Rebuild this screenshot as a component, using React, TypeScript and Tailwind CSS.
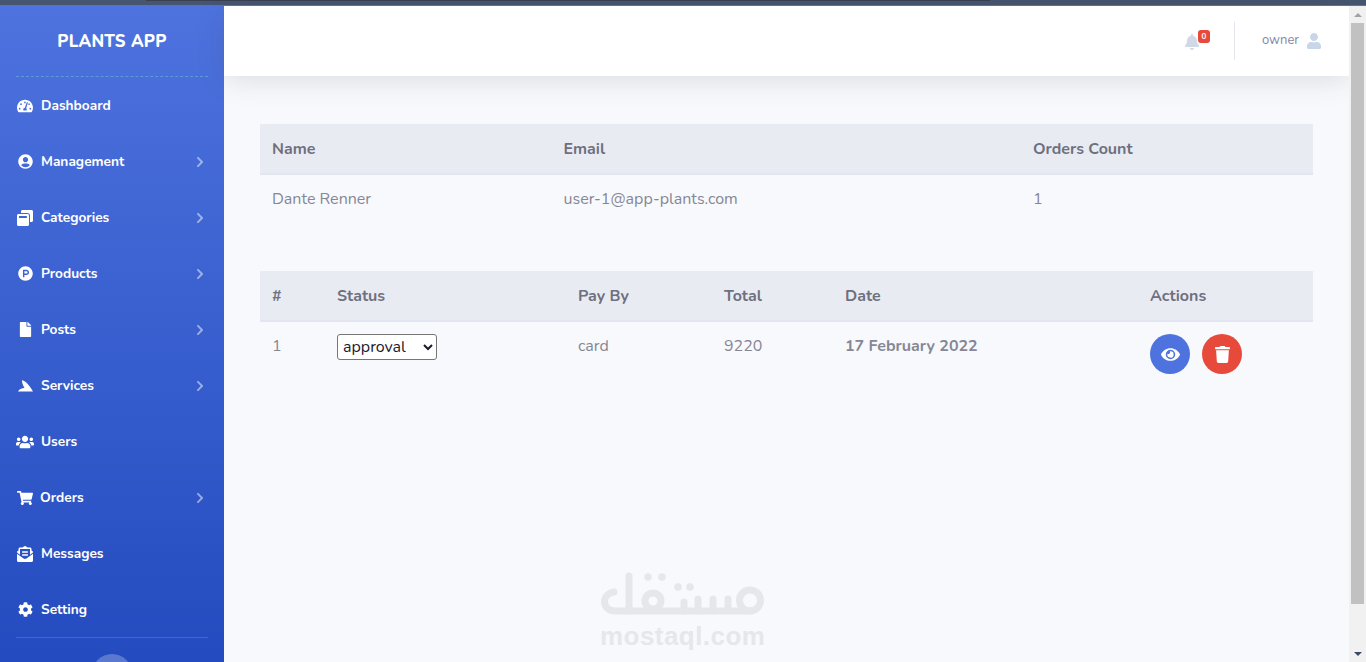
import React from "react";
import { FaTachometerAlt, FaUserCircle, FaWindowRestore, FaProductHunt, FaFile, FaUsers, FaShoppingCart, FaEnvelopeOpenText, FaCog, FaChevronRight, FaEye, FaTrash, FaBell, FaUser } from "react-icons/fa";

function FinIcon() {
  return (
    <svg width="15" height="12" viewBox="0 0 15 12" fill="currentColor">
      <path d="M4 0C8 1.5 11.5 5 15 11.5H0C1 9.5 3.5 8 6.5 8C5 5.5 4 3 4 0Z" />
    </svg>
  );
}

const items = [
  { label: "Dashboard", icon: <FaTachometerAlt className="text-[16px]" />, arrow: false, gap: "mr-[7px]" },
  { label: "Management", icon: <FaUserCircle className="text-[15px]" />, arrow: true, gap: "mr-[7px]" },
  { label: "Categories", icon: <FaWindowRestore className="text-[16px]" />, arrow: true, gap: "mr-[7px]" },
  { label: "Products", icon: <FaProductHunt className="text-[15px]" />, arrow: true, gap: "mr-[7px]" },
  { label: "Posts", icon: <FaFile className="text-[15px]" />, arrow: true, gap: "mr-[7px]" },
  { label: "Services", icon: <FinIcon />, arrow: true, gap: "mr-[7px]" },
  { label: "Users", icon: <FaUsers className="text-[18px]" />, arrow: false, gap: "mr-[7px]" },
  { label: "Orders", icon: <FaShoppingCart className="text-[16px]" />, arrow: true, gap: "mr-[6px]" },
  { label: "Messages", icon: <FaEnvelopeOpenText className="text-[16px]" />, arrow: false, gap: "mr-[7px]" },
  { label: "Setting", icon: <FaCog className="text-[15px]" />, arrow: false, gap: "mr-[7px]" },
];

const font = { fontFamily: "Nunito, Lato, 'Noto Sans', sans-serif" };

function Sidebar() {
  return (
    <aside className="w-[224px] shrink-0 h-full overflow-hidden bg-gradient-to-b from-[#4e73df] to-[#244bbf] flex flex-col text-white">
      <div className="h-[71px] shrink-0 mx-4 flex items-center justify-center text-[16.8px] font-extrabold tracking-[0.3px] pt-[2px] border-b border-dashed border-[#5f9ad8]">
        PLANTS APP
      </div>
      <nav className="flex flex-col shrink-0">
        {items.map((it) => (
          <div key={it.label} className="h-[56px] pl-4 pr-[18px] pt-[2px] flex items-center text-[13.7px] font-bold">
            <span className={`w-[18px] flex justify-center -mt-[1px] ${it.gap}`}>{it.icon}</span>
            <span className="flex-1">{it.label}</span>
            {it.arrow && <FaChevronRight className="text-[12px] text-white/50 -mt-[1px]" />}
          </div>
        ))}
      </nav>
      <div className="mx-4 shrink-0 border-t border-white/15" />
      <div className="flex justify-center mt-[16px] shrink-0">
        <div className="w-10 h-10 rounded-full bg-white/25 shrink-0" />
      </div>
    </aside>
  );
}

function Th({ children, className = "" }: { children: React.ReactNode; className?: string }) {
  return <th className={`text-left font-bold px-3 h-[50px] align-middle text-[16px] text-[#6e707e] border-b-2 border-[#e3e6f0] ${className}`}>{children}</th>;
}

function Td({ children, className = "" }: { children: React.ReactNode; className?: string }) {
  return <td className={`px-3 pt-3 align-top text-[16px] text-[#858796] ${className}`}>{children}</td>;
}

function Watermark() {
  return (
    <div className="mt-auto self-start ml-[340px] flex flex-col items-start text-[#e6e7ea] mb-[13px]">
      <svg width="166" height="50" viewBox="0 0 166 50" fill="none" stroke="currentColor" strokeWidth="7" strokeLinecap="round" strokeLinejoin="round">
        <path d="M29 4V39H15C9 39 4.5 35 4.5 29.5C4.5 25 8 21 14 20" />
        <path d="M29 39H150" />
        <circle cx="53" cy="29" r="8" />
        <path d="M84 39V30M98 39V27M113 39V27M128 39V27" />
        <circle cx="150" cy="28.5" r="10.5" />
        <circle cx="48" cy="5" r="3.8" fill="currentColor" stroke="none" />
        <circle cx="62" cy="5" r="3.8" fill="currentColor" stroke="none" />
        <circle cx="78" cy="15" r="3.8" fill="currentColor" stroke="none" />
        <circle cx="90" cy="15" r="3.8" fill="currentColor" stroke="none" />
      </svg>
      <div className="text-[26px] leading-[26px] font-bold mt-[1px] tracking-[0.45px]" style={{ fontFamily: "'Liberation Sans', sans-serif" }}>mostaql.com</div>
    </div>
  );
}

function Scrollbar() {
  return (
    <div className="w-[17px] shrink-0 h-full bg-[#f1f1f1] flex flex-col items-center">
      <div className="h-[17px] w-full shrink-0 flex items-center justify-center">
        <div className="w-0 h-0 border-x-[4px] border-x-transparent border-b-[4px] border-b-[#a8a0a8]" />
      </div>
      <div className="w-[13px] h-[581px] shrink-0 bg-[#c1c1c1]" />
      <div className="flex-1" />
      <div className="h-[17px] w-full shrink-0 flex items-center justify-center">
        <div className="w-0 h-0 border-x-[4px] border-x-transparent border-t-[4px] border-t-[#3b4868]" />
      </div>
    </div>
  );
}

export default function App() {
  return (
    <div className="w-[1366px] h-[662px] overflow-hidden flex flex-col bg-[#f8f9fc]" style={font}>
      <div className="h-[6px] shrink-0 bg-[#46566e] border-b border-[#68748a]">
        <div className="ml-[146px] w-[844px] h-px bg-[#3b3f55]" />
      </div>
      <div className="flex flex-1 min-h-0">
        <Sidebar />
        <main className="flex-1 min-w-0 flex flex-col">
          <header className="h-[70px] shrink-0 bg-white shadow-[0_4px_28px_rgba(58,59,69,0.15)] flex items-center justify-end pr-[27px]">
            <div className="relative mr-[34px] mt-[2px]">
              <FaBell className="text-[16px] text-[#d1d8e6]" />
              <span className="absolute -top-[4px] left-[14px] w-[12px] h-[13px] rounded-[3px] bg-[#e74a3b] text-white text-[8px] font-bold leading-[13px] text-center">0</span>
            </div>
            <div className="w-px h-[38px] bg-[#e3e6f0] mr-[27px]" />
            <span className="text-[13px] text-[#7f87a8] mr-[7px] -mt-[1px]">owner</span>
            <FaUser className="text-[16px] text-[#c9d5e8]" />
          </header>
          <div className="flex-1 min-h-0 flex flex-col px-[36px] pt-[48px]">
            <table className="w-full border-collapse table-fixed shrink-0">
              <thead className="bg-[#e9ebf3]">
                <tr>
                  <Th className="w-[291.5px]">Name</Th>
                  <Th className="w-[469.5px]">Email</Th>
                  <Th>Orders Count</Th>
                </tr>
              </thead>
              <tbody>
                <tr className="h-[47px]">
                  <Td>Dante Renner</Td>
                  <Td>user-1@app-plants.com</Td>
                  <Td>1</Td>
                </tr>
              </tbody>
            </table>
            <table className="w-full border-collapse table-fixed mt-[50px] shrink-0">
              <thead className="bg-[#e9ebf3]">
                <tr>
                  <Th className="w-[65px]">#</Th>
                  <Th className="w-[241px]">Status</Th>
                  <Th className="w-[146px]">Pay By</Th>
                  <Th className="w-[121px]">Total</Th>
                  <Th className="w-[305px]">Date</Th>
                  <Th>Actions</Th>
                </tr>
              </thead>
              <tbody>
                <tr>
                  <Td>1</Td>
                  <Td>
                    <select defaultValue="approval" className="w-[100px] h-[26px] block bg-white border border-[#767676] rounded-[3px] text-[#1a1a2e] pl-[1px] text-[16px] appearance-auto">
                      <option>approval</option>
                    </select>
                  </Td>
                  <Td>card</Td>
                  <Td>9220</Td>
                  <Td className="font-bold text-[#6e707e]">17 February 2022</Td>
                  <Td>
                    <div className="flex gap-3">
                      <button className="w-10 h-10 rounded-full bg-[#4e73df] text-white flex items-center justify-center"><FaEye className="text-[19px]" /></button>
                      <button className="w-10 h-10 rounded-full bg-[#e74a3b] text-white flex items-center justify-center"><FaTrash className="text-[17px]" /></button>
                    </div>
                  </Td>
                </tr>
              </tbody>
            </table>
            <Watermark />
          </div>
        </main>
        <Scrollbar />
      </div>
    </div>
  );
}
